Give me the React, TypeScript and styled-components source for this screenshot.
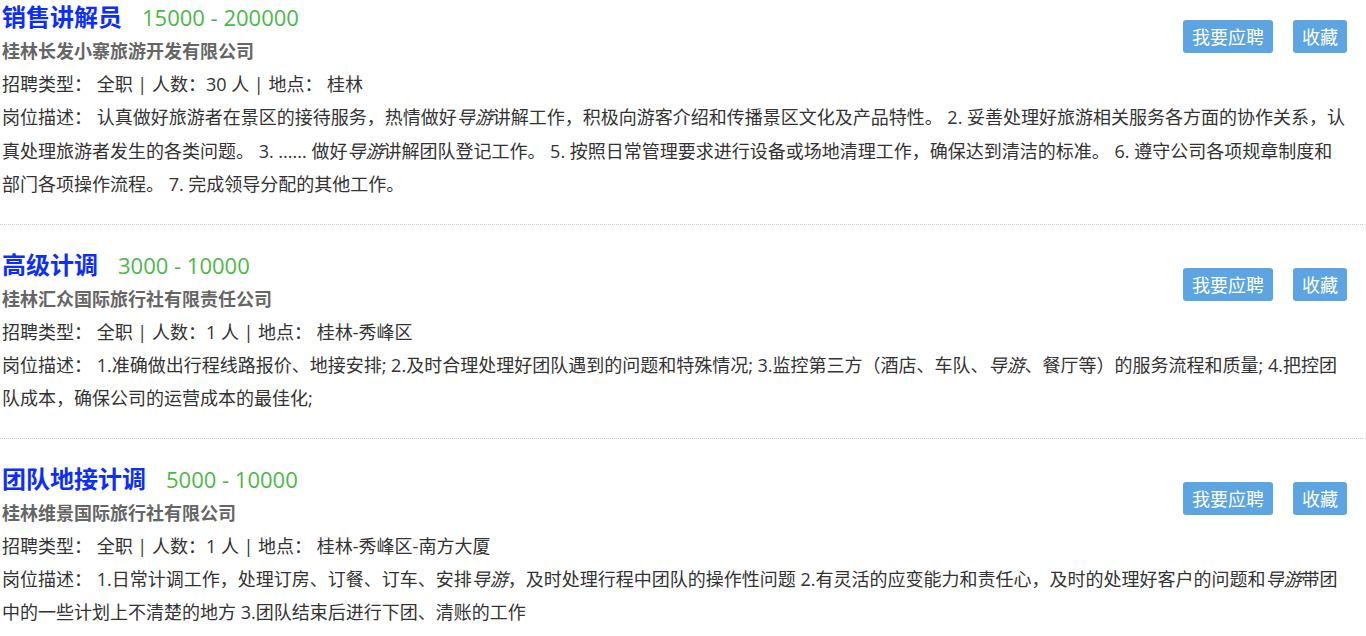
import React from "react";
import styled, { createGlobalStyle } from "styled-components";

const GlobalStyle = createGlobalStyle`
  html, body { margin: 0; padding: 0; background: #fff; }
  body { font-family: "Open Sans", "Noto Sans CJK SC", sans-serif; color: #333; }
  * { box-sizing: border-box; }
`;

const List = styled.div`
  width: 1363px;
`;

const Item = styled.div<{ $first?: boolean }>`
  display: grid;
  grid-template-columns: 1fr auto;
  padding: ${(p) => (p.$first ? "0" : "23px")} 16px 22px 2px;
  border-bottom: 1px dotted #c8c8c8;
`;

const Head = styled.div`
  display: flex;
  flex-direction: column;
`;

const TitleRow = styled.div`
  display: flex;
  align-items: baseline;
  height: 34px;
  line-height: 34px;
  margin-bottom: 1px;
`;

const Title = styled.span`
  font-size: 24px;
  font-weight: bold;
  color: #0c2dff;
`;

const Salary = styled.span`
  font-size: 22px;
  color: #4cb848;
  margin-left: 20px;
`;

const Company = styled.div`
  font-size: 18px;
  font-weight: bold;
  color: #666;
  line-height: 33px;
`;

const Info = styled.div`
  font-size: 18px;
  line-height: 33px;
  color: #333;
  white-space: pre;
`;

const Desc = styled.div`
  grid-column: 1 / -1;
  font-size: 18px;
  line-height: 33.5px;
  color: #333;
  em { font-style: italic; }
`;

const Actions = styled.div`
  display: flex;
  gap: 20px;
  align-items: flex-start;
  padding-top: 20px;
`;

const Button = styled.button`
  height: 33px;
  line-height: 33px;
  padding: 0 9px;
  border: none;
  border-radius: 3px;
  background: #5ca5e2;
  color: #fff;
  font-family: "Noto Sans CJK SC", sans-serif;
  font-size: 18px;
  cursor: pointer;
`;

type Job = {
  title: string;
  salary: string;
  company: string;
  count: string;
  place: string;
  desc: React.ReactNode;
};

const jobs: Job[] = [
  {
    title: "销售讲解员",
    salary: "15000 - 200000",
    company: "桂林长发小寨旅游开发有限公司",
    count: "30",
    place: "桂林",
    desc: (
      <>
        认真做好旅游者在景区的接待服务，热情做好<em>导游</em>讲解工作，积极向游客介绍和传播景区文化及产品特性。 2. 妥善处理好旅游相关服务各方面的协作关系，认真处理旅游者发生的各类问题。 3. ...... 做好<em>导游</em>讲解团队登记工作。 5. 按照日常管理要求进行设备或场地清理工作，确保达到清洁的标准。 6. 遵守公司各项规章制度和部门各项操作流程。 7. 完成领导分配的其他工作。
      </>
    ),
  },
  {
    title: "高级计调",
    salary: "3000 - 10000",
    company: "桂林汇众国际旅行社有限责任公司",
    count: "1",
    place: "桂林-秀峰区",
    desc: (
      <>
        1.准确做出行程线路报价、地接安排; 2.及时合理处理好团队遇到的问题和特殊情况; 3.监控第三方（酒店、车队、<em>导游</em>、餐厅等）的服务流程和质量; 4.把控团队成本，确保公司的运营成本的最佳化;
      </>
    ),
  },
  {
    title: "团队地接计调",
    salary: "5000 - 10000",
    company: "桂林维景国际旅行社有限公司",
    count: "1",
    place: "桂林-秀峰区-南方大厦",
    desc: (
      <>
        1.日常计调工作，处理订房、订餐、订车、安排<em>导游</em>，及时处理行程中团队的操作性问题 2.有灵活的应变能力和责任心，及时的处理好客户的问题和<em>导游</em>带团中的一些计划上不清楚的地方 3.团队结束后进行下团、清账的工作
      </>
    ),
  },
];

export default function App() {
  return (
    <>
      <GlobalStyle />
      <List>
        {jobs.map((j, i) => (
          <Item key={j.title} $first={i === 0}>
            <Head>
              <TitleRow>
                <Title>{j.title}</Title>
                <Salary>{j.salary}</Salary>
              </TitleRow>
              <Company>{j.company}</Company>
              <Info>{`招聘类型： 全职 | 人数：${j.count} 人 | 地点： ${j.place}`}</Info>
            </Head>
            <Actions>
              <Button>我要应聘</Button>
              <Button>收藏</Button>
            </Actions>
            <Desc>岗位描述： {j.desc}</Desc>
          </Item>
        ))}
      </List>
    </>
  );
}
